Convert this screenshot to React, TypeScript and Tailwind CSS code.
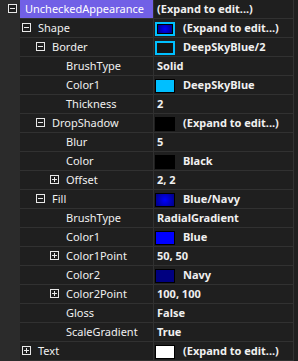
import React from "react";

type Sw = "shape" | "border" | "deepsky" | "black" | "bluenavy" | "blue" | "navy" | "white";
type Row = { name: string; level: number; exp?: "-" | "+"; value: string; sw?: Sw; sel?: boolean };

const rows: Row[] = [
  { name: "UncheckedAppearance", level: 0, exp: "-", value: "(Expand to edit...)", sel: true },
  { name: "Shape", level: 1, exp: "-", value: "(Expand to edit...)", sw: "shape" },
  { name: "Border", level: 2, exp: "-", value: "DeepSkyBlue/2", sw: "border" },
  { name: "BrushType", level: 3, value: "Solid" },
  { name: "Color1", level: 3, value: "DeepSkyBlue", sw: "deepsky" },
  { name: "Thickness", level: 3, value: "2" },
  { name: "DropShadow", level: 2, exp: "-", value: "(Expand to edit...)", sw: "black" },
  { name: "Blur", level: 3, value: "5" },
  { name: "Color", level: 3, value: "Black", sw: "black" },
  { name: "Offset", level: 3, exp: "+", value: "2, 2" },
  { name: "Fill", level: 2, exp: "-", value: "Blue/Navy", sw: "bluenavy" },
  { name: "BrushType", level: 3, value: "RadialGradient" },
  { name: "Color1", level: 3, value: "Blue", sw: "blue" },
  { name: "Color1Point", level: 3, exp: "+", value: "50, 50" },
  { name: "Color2", level: 3, value: "Navy", sw: "navy" },
  { name: "Color2Point", level: 3, exp: "+", value: "100, 100" },
  { name: "Gloss", level: 3, value: "False" },
  { name: "ScaleGradient", level: 3, value: "True" },
  { name: "Text", level: 1, exp: "+", value: "(Expand to edit...)", sw: "white" },
];

const padText = ["pl-[5px]", "pl-[18px]", "pl-[32px]", "pl-[46px]"];
const iconLeft = ["left-[8px]", "left-[22px]", "left-[36px]", "left-[50px]"];

function Swatch({ k }: { k: Sw }) {
  if (k === "shape")
    return (
      <div className="w-[20px] h-[14px] border-2 border-[#00bfff] bg-black p-[1px] shrink-0">
        <div className="w-full h-full bg-[radial-gradient(circle,#0000ff_0%,#000080_100%)]" />
      </div>
    );
  if (k === "border")
    return <div className="w-[20px] h-[14px] border-2 border-[#00bfff] bg-[#141414] shrink-0" />;
  const cls: Record<string, string> = {
    deepsky: "bg-[#00bfff]",
    black: "bg-black",
    bluenavy: "bg-[radial-gradient(circle,#0000ff_0%,#000080_100%)]",
    blue: "bg-[#0000ff]",
    navy: "bg-[#000080]",
    white: "bg-white",
  };
  return <div className={"w-[20px] h-[14px] border border-black shrink-0 " + cls[k]} />;
}

function Expander({ t }: { t: "-" | "+" }) {
  return (
    <div className="w-[9px] h-[9px] border border-[#e8e8e8] bg-[#1e1e1e] relative">
      <div className="absolute left-[1px] top-[3px] w-[5px] h-px bg-[#e8e8e8]" />
      {t === "+" && <div className="absolute left-[3px] top-[1px] w-px h-[5px] bg-[#e8e8e8]" />}
    </div>
  );
}

export default function App() {
  return (
    <div
      className="w-[298px] h-[361px] bg-[#2b2b2b] flex text-[11px] text-[#f0f0f0] overflow-hidden"
      style={{ fontFamily: '"Segoe UI", "Noto Sans", "Open Sans", sans-serif' }}
    >
      <div className="w-[20px] shrink-0 bg-[#2b2b2b]" />
      <div className="w-[273px] flex flex-col bg-[#1f1f1f]">
        {rows.map((r, i) => (
          <div key={i} className="h-[19px] flex border-b border-[#313131] relative">
            {r.exp && (
              <div className={"absolute top-[4px] " + (r.level === 0 ? "-left-[12px]" : iconLeft[r.level] + " -ml-[20px]")}>
                <Expander t={r.exp} />
              </div>
            )}
            <div
              className={
                "w-[133px] shrink-0 flex items-center whitespace-nowrap overflow-hidden pt-px " +
                padText[r.level] +
                (r.sel ? " bg-[#7160e6] text-white" : "")
              }
            >
              {r.name}
            </div>
            <div className="w-px bg-[#313131] shrink-0" />
            <div className="flex-1 flex items-center font-bold whitespace-nowrap pt-px">
              {r.sw ? (
                <>
                  <div className="ml-[1px]">
                    <Swatch k={r.sw} />
                  </div>
                  <span className="ml-[8px]">{r.value}</span>
                </>
              ) : (
                <span className="ml-[3px]">{r.value}</span>
              )}
            </div>
          </div>
        ))}
      </div>
      <div className="w-px bg-[#313131]" />
      <div className="flex-1 bg-[#1f1f1f]" />
    </div>
  );
}
